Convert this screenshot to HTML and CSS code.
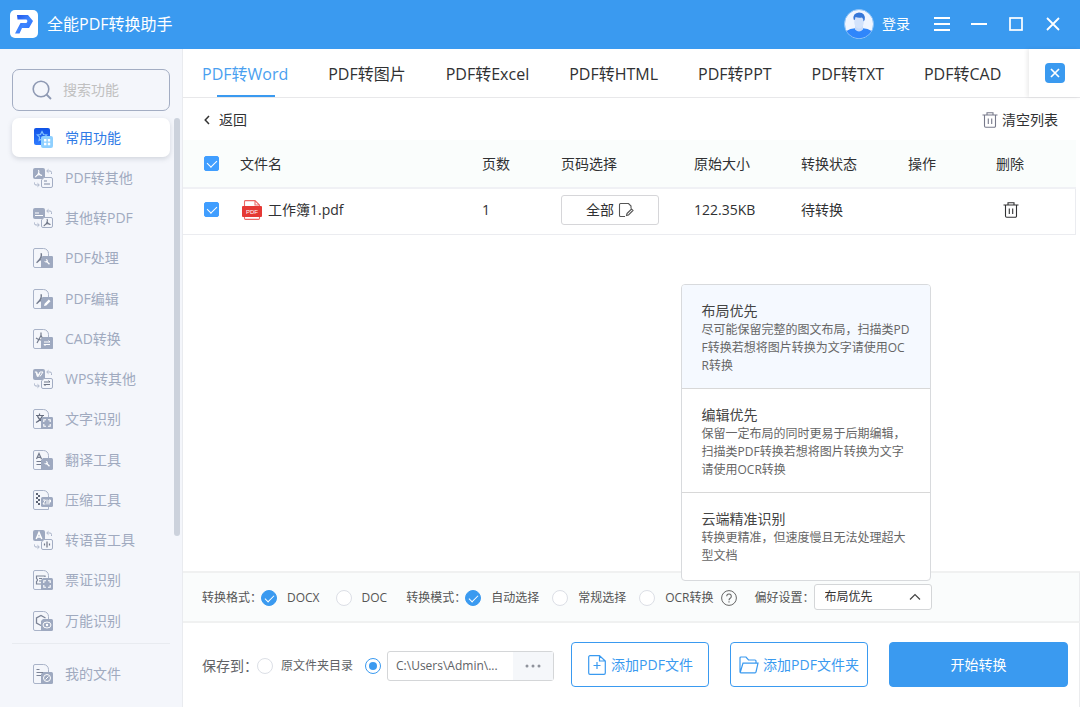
FILE: index.html
```html
<!DOCTYPE html>
<html lang="zh-CN">
<head>
<meta charset="utf-8">
<meta name="viewport" content="width=device-width, initial-scale=1">
<title>全能PDF转换助手</title>
<link rel="stylesheet" href="styles.css">
</head>
<body>
<svg class="defs" aria-hidden="true">
  <defs>
    <linearGradient id="g-logo" x1="0" y1="0" x2="1" y2="1"><stop offset="0" stop-color="#1d4fe8"/><stop offset="0.5" stop-color="#3f86ff"/><stop offset="1" stop-color="#2468ff"/></linearGradient>
    <linearGradient id="g-star" x1="0" y1="0" x2="0" y2="1"><stop offset="0" stop-color="#0f52e6"/><stop offset="1" stop-color="#2f7bff"/></linearGradient>
    <symbol id="swap" viewBox="0 0 20 20">
      <rect x="0" y="0" width="12" height="11" rx="2" fill="#9ea9c0"/>
      <path d="M14.500 3h2.500a1.500 1.500 0 0 1 1.500 1.500V6M15.500 1.300 13.700 3l1.800 1.700M1.500 14.500v1a1.500 1.500 0 0 0 1.500 1.500h2.500M4.500 15.300 6.300 17l-1.800 1.700" fill="none" stroke="#a9b3c8"/>
      <path d="M11 9.500h7a1.500 1.500 0 0 1 1.500 1.500v7a1.500 1.500 0 0 1-1.500 1.500h-8A1.500 1.500 0 0 1 8.500 18v-6z" fill="#f4f6fb" stroke="#a3adc3"/>
    </symbol>
    <symbol id="doc" viewBox="0 0 20 20">
      <path d="M2 .5h8.500a5 5 0 0 1 5 5v14H2A1.500 1.500 0 0 1 .5 18V2A1.500 1.500 0 0 1 2 .5z" fill="#f4f6fb" stroke="#a9b3c8"/>
      <path d="M10 8h8.500A1.500 1.500 0 0 1 20 9.500v9a1.500 1.500 0 0 1-1.500 1.500H8V10z" fill="#9ea9c0"/>
    </symbol>
    <symbol id="acro" viewBox="0 0 10 10"><path d="M5 1c1 2-.5 5.500-3.700 8M4.900 3.500c.5 2 2 3.500 4 3.700M2.500 7.200c2-1 4-1.300 6.400 0" fill="none" stroke="currentColor" stroke-width="1.200"/></symbol>
    <symbol id="wrench" viewBox="0 0 10 10"><path d="M1.500 3.500a2.600 2.600 0 0 0 3.300 2L7.500 8.500 8.700 7.300 6 4.700A2.600 2.600 0 0 0 3.300 1.300L4.600 3 3.200 4.400z" fill="#fff"/></symbol>
    <symbol id="scan" viewBox="0 0 10 10"><path d="M1 3.800V1h2.800M6.200 1H9v2.800M9 6.200V9H6.200M3.800 9H1V6.200" fill="none" stroke="#fff" stroke-width="1.400"/></symbol>
    <symbol id="bin" viewBox="0 0 16 16"><path d="M.5 3h15M5 3V.8h6V3M2.500 3v11a1.200 1.200 0 0 0 1.200 1.200h8.600A1.200 1.200 0 0 0 13.500 14V3M6.300 6.500V12M9.700 6.500V12" fill="none" stroke="currentColor" stroke-width="1.100"/></symbol>
  </defs>
</svg>

<div class="app">
  <header class="titlebar">
    <svg class="logo" viewBox="0 0 28 28" aria-hidden="true"><rect width="28" height="28" rx="5" fill="#fff"/><path d="M7 5h11l5 6-4 7h-7l-2.500 5.500H5L10.500 13h6l1-2-1-1.500H7.500z" fill="url(#g-logo)"/></svg>
    <h1 class="brand">全能PDF转换助手</h1>
    <button class="login" type="button">
      <svg class="avatar" viewBox="0 0 30 30" aria-hidden="true">
        <circle cx="15" cy="15" r="14.500" fill="#f0f5ff" stroke="#8dc2f7"/>
        <path d="M2.500 22Q6 19.500 11 19.200h8q5 .3 8.500 2.800A14.500 14.500 0 0 1 2.500 22z" fill="#2f86fb"/>
        <path d="M11 17h8v3.500q-4 4-8 0z" fill="#c6dafa"/>
        <path d="M10.300 8h9.400v6q-.5 5-4.700 5.500Q10.800 19 10.300 14z" fill="#d3e2fb"/>
        <path d="M9.600 10.500Q8.500 4 15 3.500q6.800 0 5.700 7.500l-1.200 1.500q0-3-1.500-4-3.500.8-6.500-.5l-.7 3z" fill="#3676d8"/>
      </svg>
      <span>登录</span>
    </button>
    <button class="win" type="button" aria-label="菜单"><svg viewBox="0 0 16 16"><path d="M0 2h16M0 8h16M0 14h16" stroke="#fff" stroke-width="2"/></svg></button>
    <button class="win" type="button" aria-label="最小化"><svg viewBox="0 0 16 16"><path d="M0 8h16" stroke="#fff" stroke-width="2"/></svg></button>
    <button class="win" type="button" aria-label="最大化"><svg viewBox="0 0 16 16"><rect x="2" y="2" width="12" height="12" fill="none" stroke="#fff" stroke-width="1.700"/></svg></button>
    <button class="win" type="button" aria-label="关闭"><svg viewBox="0 0 16 16"><path d="M2 2l12 12M14 2 2 14" stroke="#fff" stroke-width="1.800"/></svg></button>
  </header>

  <aside class="sidebar">
    <label class="search">
      <svg viewBox="0 0 20 20" aria-hidden="true"><circle cx="9" cy="9" r="7.800" fill="none" stroke="#8e99b3" stroke-width="1.600"/><path d="M14.500 14.500 19 19" stroke="#8e99b3" stroke-width="1.800"/></svg>
      <input type="text" placeholder="搜索功能" aria-label="搜索功能">
    </label>
    <nav class="nav">
      <a class="item active" href="#"><svg viewBox="0 0 20 20"><rect x="1" y="0" width="16" height="17" rx="2" fill="url(#g-star)"/><path d="m9 3.500 1.500 3 3.200.4-2.300 2.300.5 3.200L9 10.900l-2.900 1.500.5-3.200-2.300-2.300 3.200-.4z" fill="none" stroke="#7fc0ff" stroke-width="1.200"/><rect x="8" y="8" width="12" height="12" rx="2" fill="#8fd0ff"/><path d="M11 11h2.400v2.400H11zM14.800 11h2.400v2.400h-2.400zM11 14.800h2.400v2.400H11zM14.800 14.800h2.400v2.400h-2.400z" fill="#fff"/></svg>常用功能</a>
      <a class="item" href="#"><svg viewBox="0 0 20 20"><use href="#swap"/><use href="#acro" x="1" y="1" width="9" height="9" color="#fff"/><path d="M11 13h3M11 16h6" stroke="#7f8aa3" stroke-width="1.200"/></svg>PDF转其他</a>
      <a class="item" href="#"><svg viewBox="0 0 20 20"><use href="#swap"/><path d="M2 5h4M2 7.500h8" stroke="#fff" stroke-width="1.200"/><use href="#acro" x="9.500" y="10" width="9" height="9" color="#6f7687"/></svg>其他转PDF</a>
      <a class="item" href="#"><svg viewBox="0 0 20 20"><use href="#doc"/><use href="#acro" x="2" y="4" width="12" height="12" color="#737b8d"/><path d="M10 8h8.500A1.500 1.500 0 0 1 20 9.500v9a1.500 1.500 0 0 1-1.500 1.500H8V10z" fill="#9ea9c0"/><use href="#wrench" x="10" y="10" width="8" height="8"/></svg>PDF处理</a>
      <a class="item" href="#"><svg viewBox="0 0 20 20"><use href="#doc"/><use href="#acro" x="2" y="4" width="12" height="12" color="#737b8d"/><path d="M10 8h8.500A1.500 1.500 0 0 1 20 9.500v9a1.500 1.500 0 0 1-1.500 1.500H8V10z" fill="#9ea9c0"/><path d="m11 17 .6-2.300 4.200-4.200 1.700 1.700-4.200 4.200z" fill="#fff"/></svg>PDF编辑</a>
      <a class="item" href="#"><svg viewBox="0 0 20 20"><use href="#doc"/><path d="M8 3.500v3M8 6.500 4 14M8 6.500 12 14M3 9q5 4 10 0" fill="none" stroke="#737b8d" stroke-width="1.200"/><path d="M10 8h8.500A1.500 1.500 0 0 1 20 9.500v9a1.500 1.500 0 0 1-1.500 1.500H8V10z" fill="#9ea9c0"/><path d="M11 13h6l-1.500-1.500M17 15.500h-6l1.500 1.500" fill="none" stroke="#fff"/></svg>CAD转换</a>
      <a class="item" href="#"><svg viewBox="0 0 20 20"><use href="#swap"/><path d="M1.800 3h2l1 4L7 3h3L7 7.500M3 3l1.300 4.500h1L7 4" fill="none" stroke="#fff"/><path d="M11 13h6l-1.500-1.500M17 15.500h-6l1.500 1.500" fill="none" stroke="#6f7687"/></svg>WPS转其他</a>
      <a class="item" href="#"><svg viewBox="0 0 20 20"><use href="#doc"/><path d="M3 6.500h8M6.500 4.500v2M9.500 6.500Q8 11 3 13.500M4.500 7Q6 11 10 12.500" fill="none" stroke="#666e80" stroke-width="1.200"/><path d="M10 8h8.500A1.500 1.500 0 0 1 20 9.500v9a1.500 1.500 0 0 1-1.500 1.500H8V10z" fill="#9ea9c0"/><use href="#scan" x="10" y="10" width="8" height="8"/></svg>文字识别</a>
      <a class="item" href="#"><svg viewBox="0 0 20 20"><use href="#doc"/><path d="M3.500 9 6 3.500 8.500 9M4.300 7.300h3.400M3.500 11.500H8M3.500 14.500H8" fill="none" stroke="#737b8d" stroke-width="1.200"/><use href="#wrench" x="10" y="10" width="8" height="8"/></svg>翻译工具</a>
      <a class="item" href="#"><svg viewBox="0 0 20 20"><path d="M2 .5h8.500a5 5 0 0 1 5 5v14H2A1.500 1.500 0 0 1 .5 18V2A1.500 1.500 0 0 1 2 .5z" fill="none" stroke="#a9b3c8"/><path d="M4 3v2M6 5v2M4 7v2M6 9v2M4 11v2M6 13v2" stroke="#5c6475" stroke-width="2"/><rect x="8" y="7" width="12" height="10" rx="1.500" fill="#9ea9c0"/><path d="M10 10h2.500L10 14h2.500M14 9.500v5M16 14.500V10h1.500v2H16" fill="none" stroke="#fff"/></svg>压缩工具</a>
      <a class="item" href="#"><svg viewBox="0 0 20 20"><use href="#swap"/><path d="M3.200 9 6 2.500 8.800 9M4.300 7h3.400" fill="none" stroke="#fff" stroke-width="1.500"/><path d="M11.500 13.500v2M14 11.500v6M16.500 13.500v2" stroke="#6f7687" stroke-width="1.200"/></svg>转语音工具</a>
      <a class="item" href="#"><svg viewBox="0 0 20 20"><use href="#doc"/><path d="M12 7V6H3.500v2.500q2 1.500 0 3V14H8M6 8.500h3M6 11h2" fill="none" stroke="#7b8396" stroke-width="1.200"/><use href="#scan" x="10" y="10" width="8" height="8"/></svg>票证识别</a>
      <a class="item" href="#"><svg viewBox="0 0 20 20"><use href="#doc"/><path d="M8 14.500 3.500 12V7L8 4.500 12.500 7" fill="none" stroke="#7b8396" stroke-width="1.300"/><ellipse cx="14" cy="14" rx="4" ry="3" fill="none" stroke="#fff"/><circle cx="14" cy="14" r="1.200" fill="#fff"/></svg>万能识别</a>
      <span class="scrollbar"></span>
    </nav>
    <div class="mine">
      <a class="item" href="#"><svg viewBox="0 0 20 20"><use href="#doc"/><path d="M3.500 5.500h3M3.500 8.500H10M3.500 11.500H8" stroke="#7b8396" stroke-width="1.200"/><circle cx="14" cy="14" r="3.500" fill="none" stroke="#fff"/><path d="m12.500 15.500 3-3" stroke="#fff"/></svg>我的文件</a>
    </div>
  </aside>

  <main class="main">
    <div class="tabs">
      <nav class="tablist">
        <a class="tab current" href="#">PDF转Word</a>
        <a class="tab" href="#">PDF转图片</a>
        <a class="tab" href="#">PDF转Excel</a>
        <a class="tab" href="#">PDF转HTML</a>
        <a class="tab" href="#">PDF转PPT</a>
        <a class="tab" href="#">PDF转TXT</a>
        <a class="tab" href="#">PDF转CAD</a>
      </nav>
      <div class="closer"><button type="button" aria-label="关闭标签"><svg viewBox="0 0 20 20"><path d="m6 6 8 8M14 6l-8 8" stroke="#fff" stroke-width="1.700"/></svg></button></div>
    </div>

    <div class="toolbar">
      <button type="button" class="back"><svg viewBox="0 0 6 10" aria-hidden="true"><path d="M5 1 1.200 5 5 9" fill="none" stroke="#333" stroke-width="1.500"/></svg>返回</button>
      <button type="button" class="clear"><svg viewBox="0 0 16 16" aria-hidden="true"><use href="#bin"/></svg>清空列表</button>
    </div>

    <table class="files">
      <colgroup><col class="c-check"><col><col class="c-pages"><col class="c-range"><col class="c-size"><col class="c-size"><col class="c-op"><col class="c-del"></colgroup>
      <thead>
        <tr><th><input type="checkbox" class="check" checked aria-label="全选"></th><th>文件名</th><th>页数</th><th>页码选择</th><th>原始大小</th><th>转换状态</th><th>操作</th><th>删除</th></tr>
      </thead>
      <tbody>
        <tr>
          <td><input type="checkbox" class="check" checked aria-label="选择 工作簿1.pdf"></td>
          <td><span class="file"><svg viewBox="0 0 20 20" aria-hidden="true"><path d="M2.500 7V1.500A1 1 0 0 1 3.500.6h9.500L17.500 5v2M13 .8V5h4.500M2.500 15v3.500a1 1 0 0 0 1 .9h13a1 1 0 0 0 1-.9V15" fill="none" stroke="#ec6a67" stroke-width="1.100"/><rect x="0" y="6" width="20" height="11" rx="1" fill="#e53935"/><text x="10" y="14" class="pdf-tag">PDF</text></svg>工作簿1.pdf</span></td>
          <td>1</td>
          <td><button type="button" class="range">全部<svg viewBox="0 0 16 16" aria-hidden="true"><path d="M7 14.500H2.500a1 1 0 0 1-1-1v-11a1 1 0 0 1 1-1h8L13 4v2.500M9 11.500l4.500-4.500 1.500 1.500-4.500 4.500L8.500 13.500z" fill="none" stroke="#555" stroke-width="1.100"/></svg></button></td>
          <td>122.35KB</td>
          <td>待转换</td>
          <td></td>
          <td><button type="button" class="del" aria-label="删除"><svg viewBox="0 0 16 16"><use href="#bin"/></svg></button></td>
        </tr>
      </tbody>
    </table>

    <div class="blank"></div>

    <form class="options">
      <fieldset class="format">
        <legend>转换格式：</legend>
        <label><input type="radio" class="radio tick" name="format" checked>DOCX</label>
        <label><input type="radio" class="radio tick" name="format">DOC</label>
      </fieldset>
      <fieldset class="mode">
        <legend>转换模式：</legend>
        <label><input type="radio" class="radio tick" name="mode" checked>自动选择</label>
        <label><input type="radio" class="radio tick" name="mode">常规选择</label>
        <label><input type="radio" class="radio tick" name="mode">OCR转换</label>
        <button type="button" class="help" aria-label="帮助"><svg viewBox="0 0 16 16"><circle cx="8" cy="8" r="7.400" fill="none" stroke="#666"/><path d="M5.700 6.300a2.300 2.300 0 1 1 3.500 2Q8 9 8 10.200M8 11.300v1.200" fill="none" stroke="#666" stroke-width="1.100"/></svg></button>
      </fieldset>
      <div class="pref">
        <label for="pref">偏好设置：</label>
        <div class="picker">
          <select id="pref"><option>布局优先</option><option>编辑优先</option><option>云端精准识别</option></select>
          <svg class="chevron" viewBox="0 0 12 8" aria-hidden="true"><path d="m1 6.500 5-5 5 5" fill="none" stroke="#444" stroke-width="1.200"/></svg>
          <ul class="menu">
            <li class="chosen"><strong>布局优先</strong><p>尽可能保留完整的图文布局，扫描类PDF转换若想将图片转换为文字请使用OCR转换</p></li>
            <li><strong>编辑优先</strong><p>保留一定布局的同时更易于后期编辑，扫描类PDF转换若想将图片转换为文字请使用OCR转换</p></li>
            <li><strong>云端精准识别</strong><p>转换更精准，但速度慢且无法处理超大型文档</p></li>
          </ul>
        </div>
      </div>
    </form>

    <footer class="actions">
      <span class="saveto">保存到：</span>
      <label class="origin"><input type="radio" class="radio" name="dest">原文件夹目录</label>
      <input type="radio" class="radio" name="dest" checked aria-label="自定义目录">
      <div class="path"><input type="text" value="C:\Users\Admin\..." aria-label="保存目录"><button type="button" aria-label="浏览"><svg viewBox="0 0 16 4"><path d="M.5 2a1.500 1.500 0 1 0 3 0 1.500 1.500 0 1 0-3 0M6.500 2a1.500 1.500 0 1 0 3 0 1.500 1.500 0 1 0-3 0M12.500 2a1.500 1.500 0 1 0 3 0 1.500 1.500 0 1 0-3 0" fill="#8f939c"/></svg></button></div>
      <button type="button" class="btn"><svg viewBox="0 0 20 20" aria-hidden="true"><path d="M12.500.7H3A1.300 1.300 0 0 0 1.700 2v16A1.300 1.300 0 0 0 3 19.300h14a1.300 1.300 0 0 0 1.300-1.300V6zM12.500.7V6h5.800M10 7v7M6.500 10.500h7" fill="none" stroke="#3a9af0" stroke-width="1.200"/></svg>添加PDF文件</button>
      <button type="button" class="btn"><svg viewBox="0 0 20 20" aria-hidden="true"><path d="M1 17V3a1 1 0 0 1 1-1h5l2.500 3H16a1 1 0 0 1 1 1v2M1.200 17.500 4 8.200h15L17 17a1 1 0 0 1-1 .8H2a1 1 0 0 1-.8-.3z" fill="none" stroke="#3a9af0" stroke-width="1.200"/></svg>添加PDF文件夹</button>
      <button type="button" class="btn primary">开始转换</button>
    </footer>
  </main>
</div>
</body>
</html>
```

FILE: styles.css
```css
* { box-sizing: border-box; }

body {
  margin: 0;
  font: 14px/20px "Open Sans", "Noto Sans CJK SC", sans-serif;
  color: #303133;
}

button, input, select { font: inherit; color: inherit; margin: 0; }
button { padding: 0; border: 0; background: none; cursor: pointer; }
a { color: inherit; text-decoration: none; }
svg { display: block; flex: none; }
.defs { position: absolute; width: 0; height: 0; }

.app {
  display: grid;
  grid-template: 49px minmax(0, 1fr) / 183px minmax(0, 1fr);
  min-height: 100vh;
}

/* Title bar */
.titlebar {
  grid-column: 1 / -1;
  display: flex;
  align-items: center;
  padding: 0 19px 2px 10px;
  background: #3a9af0;
  color: #fff;
}
.logo { width: 28px; height: 28px; }
.brand { margin: 0 auto 0 9px; font-size: 16px; line-height: 24px; font-weight: 400; }
.login { display: flex; align-items: center; gap: 8px; margin-right: 24px; }
.avatar { width: 30px; height: 30px; }
.win { margin-left: 21px; }
.login + .win { margin-left: 0; }
.win svg { width: 16px; height: 16px; }

/* Sidebar */
.sidebar {
  display: flex;
  flex-direction: column;
  padding: 20px 12px 14px;
  background: #f4f6fb;
  border-right: 1px solid #e9ebef;
}
.search {
  display: flex;
  align-items: center;
  gap: 11px;
  height: 42px;
  padding: 0 19px;
  border: 1px solid #a3adc3;
  border-radius: 7px;
}
.search svg { width: 20px; height: 20px; }
.search input { width: 100%; min-width: 0; padding: 0; border: 0; outline: 0; background: none; }
.search input::placeholder { color: #c0c0c0; opacity: 1; }
.nav {
  position: relative;
  flex: 1;
  display: flex;
  flex-direction: column;
  justify-content: space-between;
  margin-top: 7px;
}
.item {
  display: flex;
  align-items: center;
  gap: 12px;
  height: 39px;
  padding: 0 21px;
  border-radius: 7px;
  color: #a0aabf;
}
.item svg { width: 20px; height: 20px; }
.item.active { background: #fff; color: #2f7be6; box-shadow: 0 2px 5px rgba(90, 100, 120, .22); }
.scrollbar {
  position: absolute;
  top: 0;
  right: -10px;
  width: 6px;
  height: 80%;
  border-radius: 3px;
  background: #ccd2dc;
}
.mine { margin-top: 3px; padding-top: 10px; border-top: 1px solid #e8ebf0; }

/* Main column */
.main { display: flex; flex-direction: column; min-width: 0; background: #fff; }
.tabs { display: flex; height: 49px; border-bottom: 1px solid #e8e8ea; }
.tablist { flex: 1; display: flex; gap: 40px; padding-left: 19px; overflow: hidden; }
.tab { position: relative; padding-top: 1px; font-size: 16px; line-height: 48px; white-space: nowrap; }
.tab.current { color: #4a9ff0; }
.tab.current::after {
  content: "";
  position: absolute;
  left: 15px;
  right: 13px;
  bottom: 0;
  height: 2px;
  background: #3a9af0;
}
.closer { display: flex; align-items: center; justify-content: center; width: 51px; box-shadow: -2px 0 4px rgba(0, 0, 0, .08); }
.closer button { border-radius: 4px; background: #3a9af0; }
.closer svg { width: 20px; height: 20px; }

.toolbar { display: flex; align-items: center; justify-content: space-between; height: 42px; padding: 2px 22px 0 21px; }
.toolbar button { display: flex; align-items: center; }
.back { gap: 9px; }
.back svg { width: 6px; height: 10px; }
.clear { gap: 4px; }
.clear svg { width: 16px; height: 16px; color: #77798a; }

/* File table */
.files { table-layout: fixed; width: calc(100% - 4px); border-collapse: separate; border-spacing: 0; }
.c-check { width: 57px; }
.c-pages { width: 79px; }
.c-range { width: 133px; }
.c-size { width: 107px; }
.c-op { width: 88px; }
.c-del { width: 80px; }
.files th, .files td { padding: 0; text-align: left; font-weight: 400; }
.files th { height: 49px; background: #fafdfc; border-bottom: 2px solid #f0f1f5; }
.files td { height: 46px; border-bottom: 1px solid #ebecf0; padding-bottom: 4px; }
.files td:last-child { border-right: 1px solid #ebecf0; padding-left: 7px; }
.files th:first-child, .files td:first-child { padding-left: 21px; }
.file { display: flex; align-items: center; gap: 6px; padding-left: 2px; }
.file svg { width: 20px; height: 20px; }
.pdf-tag { font: 6px "Liberation Sans", sans-serif; fill: #fff; text-anchor: middle; }
.range {
  display: flex;
  align-items: center;
  justify-content: center;
  gap: 4px;
  width: 98px;
  height: 30px;
  border: 1px solid #d6d6d9;
  border-radius: 3px;
}
.range svg, .del svg { width: 16px; height: 16px; }
.del { display: block; }

.check {
  display: block;
  position: relative;
  appearance: none;
  width: 15px;
  height: 15px;
  border: 1px solid #d5d8de;
  border-radius: 2px;
  background: #fff;
}
.check:checked { border-color: #409eff; background: #409eff; }
.check:checked::after, .tick:checked::after {
  content: "";
  position: absolute;
  border: solid #fff;
  border-width: 0 1px 1px 0;
  transform: rotate(45deg);
}
.check:checked::after { left: 4px; top: 1px; width: 5px; height: 8px; }

.blank { flex: 1; }

/* Conversion options */
.options {
  display: flex;
  align-items: center;
  height: 52px;
  padding: 1px 0 0 19px;
  border-top: 2px solid #f0f1f1;
  border-bottom: 2px solid #f0f1f1;
  border-right: 1px solid #ebecee;
  background: #fafcfc;
  font-size: 12px;
  color: #555;
  white-space: nowrap;
}
.options fieldset { display: flex; align-items: center; margin: 0; padding: 0; border: 0; }
.options legend { float: left; padding: 0; }
.options label { display: flex; align-items: center; gap: 10px; }
.options .format { gap: 16px; margin-right: 19px; }
.options .format legend { margin-right: -17px; }
.options .mode { gap: 13px; margin-right: 18px; }
.options .mode legend { margin-right: -14px; }
.radio {
  position: relative;
  appearance: none;
  flex: none;
  width: 16px;
  height: 16px;
  border: 1px solid #dcdfe6;
  border-radius: 50%;
  background: #fff;
}
.radio:checked { border-color: #3a9af0; }
.radio:checked::after { content: ""; position: absolute; inset: 3px; border-radius: 50%; background: #3a9af0; }
.tick:checked { background: #3a9af0; }
.tick:checked::after { inset: auto; left: 5px; top: 2px; width: 4px; height: 8px; border-radius: 0; background: none; }
.help { margin-left: -6px; }
.help svg { width: 16px; height: 16px; }
.pref { display: flex; align-items: center; }
.picker { position: relative; margin: 0 0 2px -1px; }
.picker select {
  display: block;
  appearance: none;
  width: 118px;
  height: 26px;
  padding: 0 10px;
  border: 1px solid #d4d6d8;
  border-radius: 3px;
  background: #fff;
  color: #333;
}
.chevron { position: absolute; right: 11px; top: 9px; width: 12px; height: 8px; pointer-events: none; }

.menu {
  position: absolute;
  right: 1px;
  bottom: 29px;
  width: 250px;
  margin: 0;
  padding: 0;
  list-style: none;
  border: 1px solid #d8dadd;
  border-radius: 4px;
  background: #fff;
  white-space: normal;
}
.menu li { padding: 16px 19px 13px 20px; border-bottom: 1px solid #d8d8d8; }
.menu li:last-child { padding-bottom: 15px; border-bottom: 0; }
.menu .chosen { background: #f5f9ff; border-radius: 3px 3px 0 0; }
.menu strong { display: block; font-size: 14px; line-height: 20px; font-weight: 400; color: #444; }
.menu p { margin: 0; line-height: 18px; color: #666; word-break: break-all; }

/* Bottom actions */
.actions {
  display: flex;
  align-items: center;
  height: 84px;
  padding: 1px 11px 0 19px;
  border-right: 1px solid #ebecee;
  color: #606266;
  white-space: nowrap;
}
.saveto { width: 55px; }
.origin { display: flex; align-items: center; gap: 8px; margin-right: 12px; font-size: 12px; }
.path { display: flex; width: 167px; height: 30px; margin: 0 17px 0 6px; border: 1px solid #d4d6d8; border-radius: 3px; }
.path input { flex: 1; min-width: 0; padding: 0 8px; border: 0; outline: 0; background: none; font-size: 12px; }
.path button { display: flex; align-items: center; justify-content: center; width: 40px; background: #f5f7fa; }
.path svg { width: 16px; height: 4px; }
.btn {
  display: flex;
  align-items: center;
  justify-content: center;
  gap: 4px;
  width: 138px;
  height: 45px;
  margin: 0 21px 2px 0;
  border: 1px solid #3a9af0;
  border-radius: 4px;
  background: #fff;
  color: #3a9af0;
}
.btn svg { width: 20px; height: 20px; }
.btn.primary { flex: 1; margin-right: 0; background: #3a9af0; color: #fff; }
```
